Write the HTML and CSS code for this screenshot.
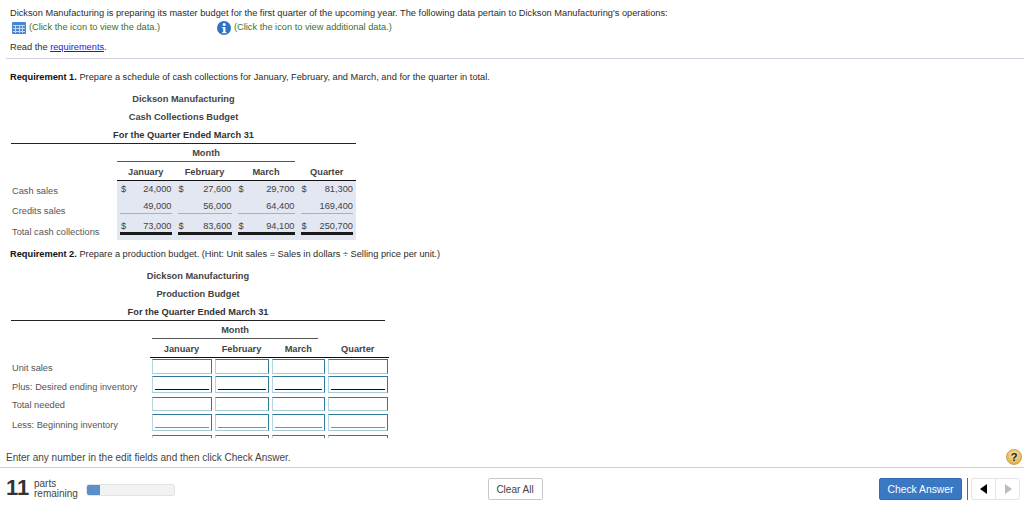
FILE: index.html
```html
<!DOCTYPE html>
<html lang="en">
<head>
<meta charset="utf-8">
<title>Dickson Manufacturing</title>
<link rel="stylesheet" href="styles.css">
</head>
<body>
<main class="content">
  <p class="intro">Dickson Manufacturing is preparing its master budget for the first quarter of the upcoming year. The following data pertain to Dickson Manufacturing's operations:</p>
  <div class="hints">
    <span class="hint hint-data">
      <svg class="icon" viewBox="0 0 14 12" width="14" height="12"><rect width="14" height="12" rx="1" fill="#4a86d0"/><path d="M1 3.5h12M1 6.5h12M1 9.5h12M3.5 3v8M7.5 3v8M10.5 3v8" stroke="#c3d8f2" stroke-width="1"/></svg>
      (Click the icon to view the data.)
    </span>
    <span class="hint">
      <svg class="icon" viewBox="0 0 14 14" width="14" height="14"><circle cx="7" cy="7" r="7" fill="#2f74c4"/><circle cx="7.2" cy="3.4" r="1.5" fill="#fff"/><path d="M5.2 6h3.2v5h1v1.2H5.2V11h1V7.2h-1z" fill="#fff"/></svg>
      (Click the icon to view additional data.)
    </span>
  </div>
  <p class="read">Read the <a href="#">requirements</a>.</p>
  <hr class="rule">
  <p class="req req-one"><b>Requirement 1.</b> Prepare a schedule of cash collections for January, February, and March, and for the quarter in total.</p>

  <section class="sheet sheet-cash">
    <div class="titles">
      <div>Dickson Manufacturing</div>
      <div>Cash Collections Budget</div>
      <div class="last">For the Quarter Ended March 31</div>
    </div>
    <div class="month-row"><div class="month">Month</div></div>
    <div class="row head"><span></span><span>January</span><span>February</span><span>March</span><span>Quarter</span></div>
    <div class="body">
      <div class="row r1">
        <span class="label">Cash sales</span>
        <span class="cell"><i>$</i>24,000</span><span class="cell"><i>$</i>27,600</span><span class="cell"><i>$</i>29,700</span><span class="cell"><i>$</i>81,300</span>
      </div>
      <div class="row r2">
        <span class="label">Credits sales</span>
        <span class="cell under">49,000</span><span class="cell under">56,000</span><span class="cell under">64,400</span><span class="cell under">169,400</span>
      </div>
      <div class="row r3">
        <span class="label">Total cash collections</span>
        <span class="cell dbl"><i>$</i>73,000</span><span class="cell dbl"><i>$</i>83,600</span><span class="cell dbl"><i>$</i>94,100</span><span class="cell dbl"><i>$</i>250,700</span>
      </div>
    </div>
  </section>

  <p class="req req-two"><b>Requirement 2.</b> Prepare a production budget. (Hint: Unit sales = Sales in dollars ÷ Selling price per unit.)</p>

  <section class="sheet sheet-prod">
    <div class="titles">
      <div>Dickson Manufacturing</div>
      <div>Production Budget</div>
      <div class="last">For the Quarter Ended March 31</div>
    </div>
    <div class="month-row"><div class="month">Month</div></div>
    <div class="row head"><span></span><span>January</span><span>February</span><span>March</span><span>Quarter</span></div>
    <div class="inputs">
      <div class="row ir"><span class="label">Unit sales</span><span class="box"></span><span class="box"></span><span class="box"></span><span class="box"></span></div>
      <div class="row ir tall"><span class="label">Plus: Desired ending inventory</span><span class="box ul-dark"></span><span class="box ul-dark"></span><span class="box ul-dark"></span><span class="box ul-dark"></span></div>
      <div class="row ir tight"><span class="label">Total needed</span><span class="box"></span><span class="box"></span><span class="box"></span><span class="box"></span></div>
      <div class="row ir tall"><span class="label">Less: Beginning inventory</span><span class="box ul-grey"></span><span class="box ul-grey"></span><span class="box ul-grey"></span><span class="box ul-grey"></span></div>
      <div class="row ir"><span class="label"></span><span class="box"></span><span class="box"></span><span class="box"></span><span class="box"></span></div>
    </div>
  </section>
</main>

<div class="status">
  <span class="status-text">Enter any number in the edit fields and then click Check Answer.</span>
  <span class="help">?</span>
</div>
<footer class="footer">
  <div class="parts">
    <span class="count">11</span>
    <span class="parts-text">parts<br>remaining</span>
    <span class="progress"><span class="progress-fill"></span></span>
  </div>
  <button class="btn clear" type="button">Clear All</button>
  <div class="actions">
    <button class="btn check" type="button">Check Answer</button>
    <span class="divider"></span>
    <span class="pager">
      <span class="page"><svg viewBox="0 0 8 10" width="8" height="10"><path d="M7 0v10L0 5z" fill="#000"/></svg></span>
      <span class="page"><svg viewBox="0 0 8 10" width="8" height="10"><path d="M1 0v10l7-5z" fill="#b9bdc2"/></svg></span>
    </span>
  </div>
</footer>
</body>
</html>
```

FILE: styles.css
```css
* { box-sizing: border-box; }
html, body { margin: 0; padding: 0; }
body {
  width: 1024px;
  height: 510px;
  overflow: hidden;
  background: #fff;
  font-family: "Liberation Sans", Arial, sans-serif;
  font-size: 9.25px;
  line-height: 12px;
  color: #333;
}
p { margin: 0; }

.content { height: 438px; overflow: hidden; padding-top: 7px; }
.intro { padding-left: 10px; color: #2b2b2b; }
.hints { display: flex; padding: 1px 0 0 12px; height: 15px; color: #37722a; }
.hint { display: flex; align-items: center; gap: 3px; height: 14px; }
.hint-data { width: 205px; }
.icon { flex: none; margin-top: 2px; }
.read { padding: 7px 0 0 10px; color: #2b2b2b; }
.read a { color: #1a1ae0; }
.rule { margin: 5px 0 0 6px; border: 0; border-top: 1px solid #d3d1e3; height: 1px; }
.req { padding-left: 10px; color: #2b2b2b; }
.req b { color: #111; }
.req-one { padding-top: 12px; }
.req-two { padding-top: 8px; }

.titles { font-weight: 700; text-align: center; color: #444; }
.titles div { height: 18px; line-height: 18px; }
.titles .last { border-bottom: 1px solid #222; line-height: 19px; color: #333; }

.sheet { margin-left: 11px; padding-top: 7px; }
.sheet-cash { width: 345px; }
.sheet-prod { width: 378px; }
.sheet-prod .titles { width: 374px; }

.row { display: grid; }
.sheet-cash .row { grid-template-columns: 106px 57.5px 60px 63px 58.5px; }
.sheet-prod .row { grid-template-columns: 139px 63px 57px 56.5px 62.5px; }

.month-row { height: 18px; display: flex; }
.month { font-weight: 700; text-align: center; color: #444; border-bottom: 1px solid #555; line-height: 19px; }
.sheet-cash .month-row { padding-left: 106px; }
.sheet-cash .month { width: 178px; }
.sheet-prod .month-row { padding-left: 141px; }
.sheet-prod .month { width: 166px; }

.head { font-weight: 700; text-align: center; color: #444; height: 19px; line-height: 20px; }
.sheet-cash .head { background: linear-gradient(#111,#111) no-repeat 106px 100% / 239px 1px; }
.sheet-prod .head { background: linear-gradient(#111,#111) no-repeat 139px 100% / 239px 1px; }

.label { color: #555; }
.body { background: linear-gradient(#e2e7f1,#e2e7f1) no-repeat 106px 0 / 239px 100%; height: 59px; }
.cell { position: relative; text-align: right; margin: 0 3px; color: #444; }
.cell i { position: absolute; left: 1px; font-style: normal; }
.r1 { height: 16px; padding-top: 2px; }
.r1 .label { padding: 2px 0 0 1px; }
.r2 { height: 20px; }
.r2 .label { padding: 8px 0 0 1px; }
.r2 .cell { height: 14px; line-height: 12px; margin-top: 3px; }
.r3 { height: 23px; }
.r3 .label { padding: 9px 0 0 1px; }
.under { border-bottom: 1px solid #aab0bb; }
.r3 .dbl { height: 15px; margin-top: 3px; border-bottom: 3px solid #1a1a1a; line-height: 12px; }

.inputs { padding-top: 1px; }
.ir { height: 17px; }
.tall { height: 21px; }
.ir .label { padding: 3px 0 0 1px; }
.tall .label { padding-top: 5px; }
.tight .label { padding-top: 2px; }
.box {
  position: relative;
  margin: 0 1.5px;
  border: 1px solid #2f7a9b;
  border-left-color: #b6d3de;
  border-bottom-color: #a9cbd8;
  height: 15px;
  background: #fff;
}
.tall .box { height: 17px; }
.tight .box { height: 14px; }
.ul-dark::after, .ul-grey::after {
  content: "";
  position: absolute;
  left: 2px;
  right: 2px;
  bottom: 2px;
  border-bottom: 1px solid #111;
}
.ul-grey::after { border-bottom-color: #8a8a8a; }

.status { height: 30px; display: flex; align-items: center; justify-content: space-between; padding: 9px 2px 0 6px; border-bottom: 1px solid #cfcfd3; }
.status-text { font-size: 10px; color: #444; padding-top: 2px; }
.help {
  width: 16px; height: 16px; border-radius: 50%;
  background: radial-gradient(circle at 50% 35%, #f8e0a0, #dba63c);
  border: 1px solid #c9a04a;
  color: #222; font-weight: 700; font-size: 11px; line-height: 14px; text-align: center;
}
.footer { height: 42px; display: grid; grid-template-columns: 1fr auto 1fr; align-items: start; padding: 10px 0 0 6px; }
.parts { display: flex; align-items: flex-start; }
.count { font-size: 22px; font-weight: 700; line-height: 26px; color: #333; width: 28px; margin-top: -3px; }
.parts-text { font-size: 10px; line-height: 10px; padding-top: 1px; color: #444; width: 52px; }
.progress { margin-top: 6px; width: 89px; height: 12px; background: #f2f2f2; border: 1px solid #e2e2e2; border-radius: 3px; overflow: hidden; display: block; }
.progress-fill { display: block; width: 14px; height: 12px; background: #5a8fcb; margin: -1px 0 0 -1px; }
.btn { font-family: inherit; font-size: 10.3px; height: 22px; padding: 0; border-radius: 2px; cursor: pointer; }
.clear { width: 55px; background: #fff; border: 1px solid #c9c9c9; color: #444; font-size: 10px; }
.actions { display: flex; justify-content: flex-end; align-items: flex-start; padding-right: 4px; }
.check { width: 83px; background: #3a78c3; border: 1px solid #326bb0; color: #fff; }
.divider { width: 1px; height: 22px; background: #666; margin: 0 3px 0 5px; }
.pager { display: flex; width: 49px; height: 22px; border: 1px solid #e3e3e3; border-radius: 3px; }
.page { flex: 1; display: flex; align-items: center; justify-content: center; }
.page + .page { border-left: 1px solid #e3e3e3; }
```
